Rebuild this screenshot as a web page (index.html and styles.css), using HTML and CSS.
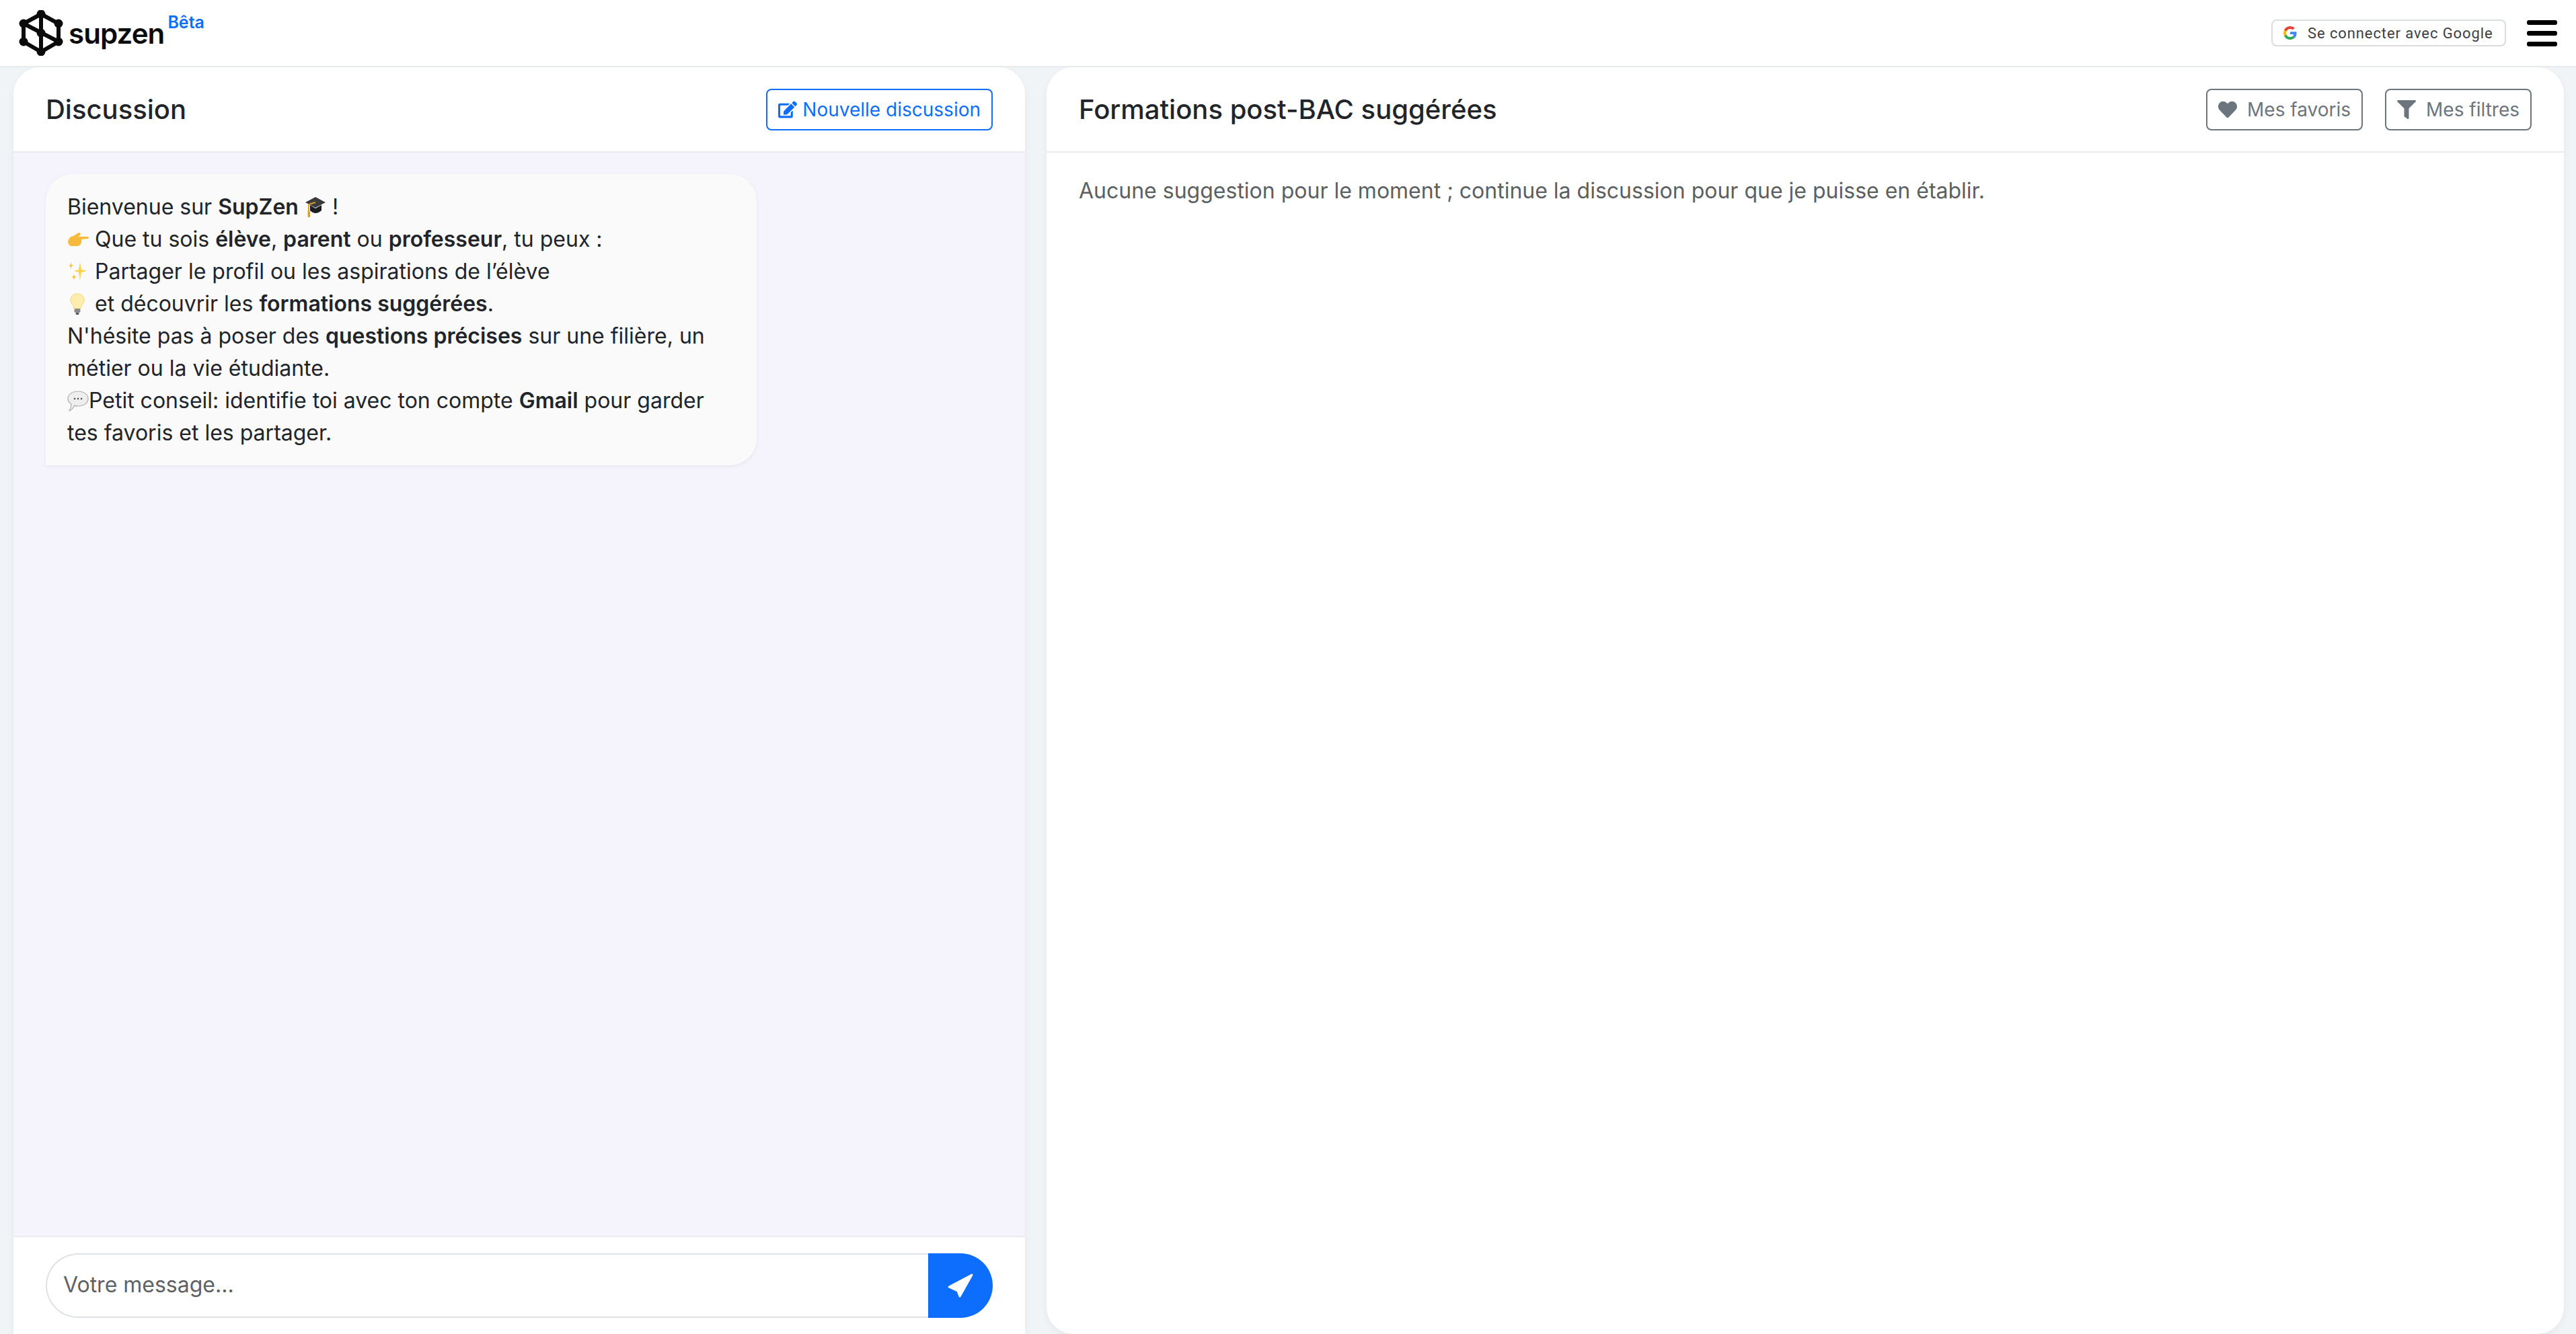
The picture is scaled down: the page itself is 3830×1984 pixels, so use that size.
FILE: index.html
```html
<!DOCTYPE html>
<html lang="fr">
<head>
<meta charset="utf-8">
<title>SupZen</title>
<link rel="stylesheet" href="styles.css">
</head>
<body>
<header class="navbar">
  <a class="brand">
    <svg class="logo" viewBox="0 0 66 68" aria-hidden="true">
      <g fill="none" stroke="#0b0b0b" stroke-width="6">
        <path d="M33 6 L59 20 V47 L33 62 L7 47 V20 Z"/>
        <path d="M33 6 V62"/>
        <path d="M7 20 L59 47"/>
      </g>
      <g fill="#0b0b0b">
        <circle cx="33" cy="6" r="6.5"/><circle cx="7" cy="20" r="6.5"/><circle cx="59" cy="20" r="6.5"/>
        <circle cx="7" cy="47" r="6.5"/><circle cx="59" cy="47" r="6.5"/><circle cx="33" cy="62" r="6.5"/>
        <circle cx="33" cy="34" r="6.5"/>
      </g>
    </svg>
    <span class="wordmark">supzen</span>
    <span class="beta">Bêta</span>
  </a>
  <div class="nav-right">
    <button class="google-btn">
      <svg class="g-icon" viewBox="0 0 48 48" aria-hidden="true">
        <path fill="#EA4335" d="M24 9.5c3.54 0 6.71 1.22 9.21 3.6l6.85-6.85C35.9 2.38 30.47 0 24 0 14.62 0 6.51 5.38 2.56 13.22l7.98 6.19C12.43 13.72 17.74 9.5 24 9.5z"/>
        <path fill="#4285F4" d="M46.98 24.55c0-1.57-.15-3.09-.38-4.55H24v9.02h12.94c-.58 2.96-2.26 5.48-4.78 7.18l7.73 6c4.51-4.18 7.09-10.36 7.09-17.65z"/>
        <path fill="#FBBC05" d="M10.53 28.59c-.48-1.45-.76-2.99-.76-4.59s.27-3.14.76-4.59l-7.98-6.19C.92 16.46 0 20.12 0 24c0 3.88.92 7.54 2.56 10.78l7.97-6.19z"/>
        <path fill="#34A853" d="M24 48c6.48 0 11.93-2.13 15.89-5.81l-7.73-6c-2.15 1.45-4.92 2.3-8.16 2.3-6.26 0-11.57-4.22-13.47-9.91l-7.98 6.19C6.51 42.62 14.62 48 24 48z"/>
      </svg>
      <span>Se connecter avec Google</span>
    </button>
    <div class="burger"><i></i><i></i><i></i></div>
  </div>
</header>

<main class="layout">
  <section class="panel chat-panel">
    <div class="panel-head">
      <h2>Discussion</h2>
      <button class="btn btn-blue">
        <svg class="ico" viewBox="0 0 576 512" aria-hidden="true"><path d="M402.6 83.2l90.2 90.2c3.8 3.8 3.8 10 0 13.8L274.4 405.6l-92.8 10.3c-12.4 1.4-22.9-9.1-21.5-21.5l10.3-92.8L388.8 83.2c3.8-3.8 10-3.8 13.8 0zm162-22.9l-48.8-48.8c-15.2-15.2-39.9-15.2-55.2 0l-35.4 35.4c-3.8 3.8-3.8 10 0 13.8l90.2 90.2c3.8 3.8 10 3.8 13.8 0l35.4-35.4c15.2-15.3 15.2-40 0-55.2zM384 346.2V448H64V128h229.8c3.2 0 6.2-1.3 8.5-3.5l40-40c7.6-7.6 2.2-20.5-8.5-20.5H48C21.5 64 0 85.5 0 112v352c0 26.5 21.5 48 48 48h352c26.5 0 48-21.5 48-48V306.2c0-10.7-12.9-16-20.5-8.5l-40 40c-2.2 2.3-3.5 5.3-3.5 8.5z"/></svg>
        Nouvelle discussion
      </button>
    </div>
    <div class="messages">
      <div class="bubble">
        Bienvenue sur <b>SupZen</b> <svg class="emoji" viewBox="0 0 32 32" aria-hidden="true"><path fill="#1d1d1f" d="M8 13 V21 Q16 29 25 21 V13 L16 18 Z"/><path fill="#3b3b3e" d="M16 17 L31 9 L16 1 L1 9 Z"/><path fill="none" stroke="#d8a032" stroke-width="2" d="M16 9 L6 12 V24"/><rect x="4.5" y="22" width="3.5" height="9" rx="1" fill="#d8a032"/></svg> !<br>
        <svg class="emoji" viewBox="0 0 32 32" aria-hidden="true"><path fill="#f6b93b" d="M1 20 Q2 12 9 11 L17 6 Q21 6 19 10 L16 12 L31 12 Q33 14 31 15 L21 16 Q22 25 15 26 L6 26 Q2 25 1 20 Z"/></svg> Que tu sois <b>élève</b>, <b>parent</b> ou <b>professeur</b>, tu peux :<br>
        <svg class="emoji" viewBox="0 0 32 32" aria-hidden="true"><path fill="#fbd34d" d="M19 2 L21 13 L29 15 L21 17 L19 28 L17 17 L10 15 L17 13 Z"/><path fill="#f9bf2c" d="M5.5 2 L6.5 6 L9 7 L6.5 8 L5.5 12 L4.5 8 L2 7 L4.5 6 Z"/><path fill="#f9bf2c" d="M10 20 L11 23 L14 24 L11 25 L10 28 L9 25 L6 24 L9 23 Z"/></svg> Partager le profil ou les aspirations de l’élève<br>
        <svg class="emoji" viewBox="0 0 32 32" aria-hidden="true"><path fill="#fdeeb0" stroke="#f3d67a" stroke-width="1" d="M15 1 C23 1 26 7 25 12 C24 16 20 18 20 23 H10 C10 18 6 16 5 12 C4 7 7 1 15 1 Z"/><rect x="10.5" y="23" width="9" height="6" rx="2" fill="#8a8a8a"/><rect x="12.5" y="29" width="5" height="3" rx="1.5" fill="#555"/></svg> et découvrir les <b>formations suggérées</b>.<br>
        N'hésite pas à poser des <b>questions précises</b> sur une filière, un<br>
        métier ou la vie étudiante.<br>
        <svg class="emoji" viewBox="0 0 32 32" aria-hidden="true"><path fill="#eeeeee" stroke="#adadad" stroke-width="1.2" d="M16 2 C24 2 31 6 31 13 C31 20 24 24 16 24 C14 24 12 24 11 23 Q8 29 3 31 Q6 26 6 21 Q1 18 1 13 C1 6 8 2 16 2 Z"/><circle cx="11" cy="13" r="1.2" fill="#444"/><circle cx="16" cy="13" r="1.2" fill="#444"/><circle cx="21" cy="13" r="1.2" fill="#444"/></svg>Petit conseil: identifie toi avec ton compte <b>Gmail</b> pour garder<br>
        tes favoris et les partager.
      </div>
    </div>
    <div class="composer">
      <input class="composer-input" type="text" placeholder="Votre message...">
      <button class="send" aria-label="Envoyer">
        <svg class="send-ico" viewBox="0 0 40 38" aria-hidden="true"><path d="M37 3 L3 21 L16 27 L19 35 Z"/></svg>
      </button>
    </div>
  </section>

  <section class="panel results-panel">
    <div class="panel-head">
      <h2>Formations post-BAC suggérées</h2>
      <div class="head-actions">
        <button class="btn btn-grey">
          <svg class="ico" viewBox="0 0 512 512" aria-hidden="true"><path d="M462.3 62.6C407.5 15.9 326 24.3 275.7 76.2L256 96.5l-19.7-20.3C186.1 24.3 104.5 15.9 49.7 62.6c-62.8 53.6-66.1 149.8-9.9 207.9l193.5 199.8c12.5 12.9 32.8 12.9 45.3 0l193.5-199.8c56.3-58.1 53-154.3-9.8-207.9z"/></svg>
          Mes favoris
        </button>
        <button class="btn btn-grey">
          <svg class="ico" viewBox="0 0 512 512" aria-hidden="true"><path d="M487.976 0H24.028C2.71 0-8.047 25.866 7.058 40.971L192 225.941V432c0 7.831 3.821 15.17 10.237 19.662l80 55.98C298.02 518.69 320 507.493 320 487.98V225.941l184.947-184.97C520.021 25.896 509.338 0 487.976 0z"/></svg>
          Mes filtres
        </button>
      </div>
    </div>
    <p class="empty">Aucune suggestion pour le moment ; continue la discussion pour que je puisse en établir.</p>
  </section>
</main>
</body>
</html>
```

FILE: styles.css
```css
* { box-sizing: border-box; }
html, body { height: 100%; }
body {
  margin: 0;
  height: 100vh;
  overflow: hidden;
  display: flex;
  flex-direction: column;
  background: #f1f4f7;
  font-family: Inter, "Liberation Sans", sans-serif;
  font-size: 32px;
  line-height: 48px;
  color: #212529;
}
button { font-family: inherit; cursor: pointer; }

.navbar {
  flex: 0 0 100px;
  display: flex;
  align-items: center;
  justify-content: space-between;
  padding: 0 28px 0 28px;
  background: #fff;
  border-bottom: 2px solid #e9ecef;
}
.brand { display: flex; align-items: flex-start; }
.logo { width: 66px; height: 68px; display: block; }
.wordmark {
  margin-left: 8px;
  margin-top: 9px;
  font-size: 42px;
  line-height: 52px;
  font-weight: 600;
  letter-spacing: -0.9px;
  color: #0b0b0b;
}
.beta {
  margin-left: 5px;
  margin-top: 0;
  font-size: 25px;
  line-height: 36px;
  font-weight: 600;
  color: #0d6efd;
}
.nav-right { display: flex; align-items: center; gap: 31px; }
.google-btn {
  height: 40px;
  width: 349px;
  display: flex;
  align-items: center;
  padding: 0 16px;
  gap: 16px;
  background: #fff;
  border: 2px solid #dadce0;
  border-radius: 8px;
  font-family: Roboto, sans-serif;
  font-size: 22px;
  letter-spacing: 0.9px;
  color: #3c4043;
  white-space: nowrap;
}
.g-icon { width: 20px; height: 20px; flex: none; }
.burger { width: 45px; display: flex; flex-direction: column; gap: 9px; }
.burger i { display: block; height: 7px; border-radius: 3px; background: #000; }

.layout {
  flex: 1;
  min-height: 0;
  display: flex;
  gap: 32px;
  padding: 0 18px 0 20px;
}
.panel {
  display: flex;
  flex-direction: column;
  background: #fff;
  box-shadow: 0 4px 12px rgba(0, 0, 0, 0.05);
  overflow: hidden;
}
.chat-panel { flex: 0 0 1504px; border-radius: 40px 40px 0 0; }
.results-panel { flex: 1; border-radius: 40px; }

.panel-head {
  flex: 0 0 127px;
  display: flex;
  align-items: center;
  justify-content: space-between;
  padding: 0 48px;
  border-bottom: 2px solid #e9ecef;
}
.panel-head h2 {
  margin: 0;
  font-size: 40px;
  line-height: 48px;
  font-weight: 500;
}
.head-actions { display: flex; gap: 33px; }
.btn {
  display: flex;
  align-items: center;
  gap: 8px;
  height: 62px;
  padding: 0 16px;
  background: #fff;
  border: 2px solid;
  border-radius: 8px;
  font-size: 28px;
  line-height: 42px;
  white-space: nowrap;
}
.btn-blue { color: #0d6efd; border-color: #0d6efd; }
.btn-grey { color: #6c757d; border-color: #6c757d; gap: 15px; }
.ico { width: 28px; height: 28px; fill: currentColor; flex: none; }

.messages {
  flex: 1;
  min-height: 0;
  padding: 32px 48px;
  background: #f5f4fd;
}
.bubble {
  width: 1057px;
  padding: 25px 32px 24px;
  background: #fafafa;
  border-radius: 40px 40px 40px 0;
  box-shadow: 0 2px 6px rgba(0, 0, 0, 0.06);
}
.bubble b { font-weight: 600; }
.emoji { width: 32px; height: 32px; vertical-align: -5px; }

.composer {
  flex: 0 0 146px;
  display: flex;
  padding: 24px 48px;
  background: #fff;
  border-top: 2px solid #e9ecef;
}
.composer-input {
  flex: 1;
  min-width: 0;
  height: 96px;
  padding: 0 24px 4px;
  border: 2px solid #dee2e6;
  border-right: 0;
  border-radius: 48px 0 0 48px;
  background: #fff;
  font-family: inherit;
  font-size: 32px;
  color: #212529;
  outline: none;
}
.composer-input::placeholder { color: #5f6265; opacity: 1; }
.send {
  flex: 0 0 96px;
  height: 96px;
  display: flex;
  align-items: center;
  justify-content: center;
  padding: 0;
  border: 0;
  border-radius: 0 48px 48px 0;
  background: #0d6efd;
}
.send-ico {
  width: 40px;
  height: 38px;
  fill: #fff;
  stroke: #fff;
  stroke-width: 3;
  stroke-linejoin: round;
}
.empty { margin: 0; padding: 33px 48px; color: #5c5f62; }
```
